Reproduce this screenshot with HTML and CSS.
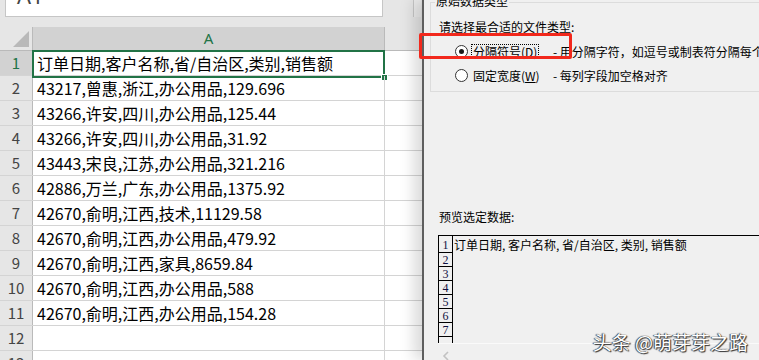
FILE: index.html
```html
<!DOCTYPE html>
<html lang="zh-CN">
<head>
    <meta charset="UTF-8">
    <meta name="viewport" content="width=device-width, initial-scale=1.0">
    <title>文本分列向导</title>
    <link rel="stylesheet" href="styles.css">
</head>
<body>
    <div class="screen">
        <div class="sheet">
            <div class="formula-area">
                <div class="name-box"><span>A1</span></div>
                <div class="formula-edge"></div>
            </div>
            <div class="col-header">
                <div class="corner"><span class="corner-tri"></span></div>
                <div class="col-a">A</div>
                <div class="col-b"></div>
            </div>
            <div class="row">
                <div class="row-num active">1</div>
                <div class="cell">订单日期,客户名称,省/自治区,类别,销售额<span class="selection"><span class="fill-handle"></span></span></div>
                <div class="cell-b"></div>
            </div>
            <div class="row"><div class="row-num">2</div><div class="cell">43217,曾惠,浙江,办公用品,129.696</div><div class="cell-b"></div></div>
            <div class="row"><div class="row-num">3</div><div class="cell">43266,许安,四川,办公用品,125.44</div><div class="cell-b"></div></div>
            <div class="row"><div class="row-num">4</div><div class="cell">43266,许安,四川,办公用品,31.92</div><div class="cell-b"></div></div>
            <div class="row"><div class="row-num">5</div><div class="cell">43443,宋良,江苏,办公用品,321.216</div><div class="cell-b"></div></div>
            <div class="row"><div class="row-num">6</div><div class="cell">42886,万兰,广东,办公用品,1375.92</div><div class="cell-b"></div></div>
            <div class="row"><div class="row-num">7</div><div class="cell">42670,俞明,江西,技术,11129.58</div><div class="cell-b"></div></div>
            <div class="row"><div class="row-num">8</div><div class="cell">42670,俞明,江西,办公用品,479.92</div><div class="cell-b"></div></div>
            <div class="row"><div class="row-num">9</div><div class="cell">42670,俞明,江西,家具,8659.84</div><div class="cell-b"></div></div>
            <div class="row"><div class="row-num">10</div><div class="cell">42670,俞明,江西,办公用品,588</div><div class="cell-b"></div></div>
            <div class="row"><div class="row-num">11</div><div class="cell">42670,俞明,江西,办公用品,154.28</div><div class="cell-b"></div></div>
            <div class="row"><div class="row-num">12</div><div class="cell"></div><div class="cell-b"></div></div>
            <div class="row"><div class="row-num">13</div><div class="cell"></div><div class="cell-b"></div></div>
        </div>

        <div class="dialog">
            <div class="group">
                <span class="group-title">原始数据类型</span>
                <div class="prompt">请选择最合适的文件类型:</div>
                <div class="option">
                    <span class="radio checked"></span>
                    <span class="option-label focus"><span>分隔符号(<u>D</u>)</span></span>
                    <span class="desc">-&nbsp;用分隔字符，如逗号或制表符分隔每个字段</span>
                </div>
                <div class="option">
                    <span class="radio"></span>
                    <span class="option-label"><span>固定宽度(<u>W</u>)</span></span>
                    <span class="desc">-&nbsp;每列字段加空格对齐</span>
                </div>
            </div>

            <div class="preview-title">预览选定数据:</div>
            <div class="preview">
                <div class="preview-nums">
                    <div class="pnum first">1</div>
                    <div class="pnum">2</div>
                    <div class="pnum">3</div>
                    <div class="pnum">4</div>
                    <div class="pnum">5</div>
                    <div class="pnum">6</div>
                    <div class="pnum">7</div>
                    <div class="pnum"></div>
                </div>
                <div class="preview-text">订单日期, 客户名称, 省/自治区, 类别, 销售额</div>
            </div>
            <div class="hscroll">
                <svg width="8" height="10" viewBox="0 0 8 10"><path d="M6 1 L2 5 L6 9" fill="none" stroke="#c2c2c2" stroke-width="1.6"/></svg>
            </div>
        </div>

        <!-- 红框标注 -->
        <div class="mark"></div>
        <div class="watermark">头条 @萌芽芽之路</div>
    </div>
</body>
</html>
```

FILE: styles.css
```css
* {
    margin: 0;
    padding: 0;
    box-sizing: border-box;
}

body {
    width: 759px;
    height: 360px;
    overflow: hidden;
    background-color: #f0f0f0;
    font-family: "Noto Sans CJK SC", sans-serif;
}

.screen {
    position: relative;
    display: flex;
    width: 759px;
    height: 360px;
    overflow: hidden;
}

/* 工作表 */
.sheet {
    width: 422px;
    flex: none;
    background-color: #fff;
    overflow: hidden;
}

.formula-area {
    height: 27px;
    display: flex;
    background-color: #e6e6e6;
}

.name-box {
    margin-left: 5px;
    width: 378px;
    height: 17px;
    background-color: #fff;
    border: 1px solid #c6c6c6;
    border-top: none;
    overflow: hidden;
    padding-left: 11px;
    font-family: "Noto Sans", sans-serif;
    font-size: 22px;
    line-height: 22px;
    color: #444;
}

.name-box span {
    display: block;
    margin-top: -16px;
}

.formula-edge {
    margin-left: 30px;
    width: 8px;
    height: 17px;
    border-left: 1px solid #c6c6c6;
    background-color: #ececec;
}

.col-header {
    display: flex;
    height: 24px;
    background-color: #e6e6e6;
    border-bottom: 1px solid #bababa;
}

.corner {
    width: 33px;
    display: flex;
    justify-content: flex-end;
    align-items: flex-end;
    padding: 0 3px 3px 0;
    border-right: 1px solid #bababa;
}

.corner-tri {
    width: 0;
    height: 0;
    border-left: 16px solid transparent;
    border-bottom: 16px solid #b9b9b9;
}

.col-a {
    width: 352px;
    background-color: #d2d2d2;
    border-right: 1px solid #bababa;
    color: #217346;
    text-align: center;
    font-family: "Noto Sans", sans-serif;
    font-size: 15px;
    line-height: 23px;
}

.col-b {
    flex: 1;
}

.row {
    display: flex;
    height: 25px;
    border-bottom: 1px solid #d4d4d4;
}

.row-num {
    width: 33px;
    background-color: #e6e6e6;
    border-right: 1px solid #bababa;
    text-align: center;
    font-size: 15px;
    line-height: 24px;
    color: #444;
}

.row-num.active {
    color: #217346;
    background-color: #d2d2d2;
}

.cell {
    position: relative;
    width: 352px;
    border-right: 1px solid #d4d4d4;
    padding-left: 4px;
    font-size: 16px;
    line-height: 24px;
    color: #000;
    white-space: nowrap;
}

.cell-b {
    flex: 1;
}

.selection {
    position: absolute;
    left: -1px;
    top: -1px;
    right: -1px;
    bottom: -3px;
    border: 2px solid #217346;
}

.fill-handle {
    position: absolute;
    right: -5px;
    bottom: -5px;
    width: 7px;
    height: 7px;
    background-color: #217346;
    border: 1px solid #fff;
}

/* 文本分列向导 */
.dialog {
    flex: 1;
    position: relative;
    z-index: 1;
    background-color: #f0f0f0;
    border-left: 2px solid #5e5e5e;
    box-shadow: -8px 0 14px rgba(0, 0, 0, 0.15);
    padding-left: 6px;
    font-size: 12px;
    color: #000;
    white-space: nowrap;
}

.group {
    position: relative;
    margin-top: 2px;
    border: 1px solid #dcdcdc;
    border-right: none;
    padding: 16px 0 4px 8px;
}

.group-title {
    position: absolute;
    top: -10px;
    left: 4px;
    padding: 0 1px;
    line-height: 16px;
    background-color: #f0f0f0;
}

.prompt {
    line-height: 16px;
    margin-bottom: 4px;
}

.option {
    display: flex;
    align-items: center;
    height: 24px;
    padding-left: 16px;
}

.radio {
    width: 13px;
    height: 13px;
    flex: none;
    border: 1px solid #333;
    border-radius: 50%;
    background-color: #fff;
    display: flex;
    justify-content: center;
    align-items: center;
}

.radio.checked::after {
    content: '';
    width: 5px;
    height: 5px;
    border-radius: 50%;
    background-color: #1a1a1a;
}

.option-label {
    width: 82px;
    flex: none;
    margin-left: 3px;
}

.option-label span {
    display: inline-block;
    padding: 0 1px;
    line-height: 13px;
    border: 1px dotted transparent;
}

.option-label.focus span {
    border-color: #000;
}

.preview-title {
    margin-top: 117px;
    padding-left: 9px;
    line-height: 16px;
}

.preview {
    display: flex;
    margin: 10px 0 0 8px;
    height: 108px;
    border-top: 1px solid #000;
    border-left: 1px solid #000;
    overflow: hidden;
}

.preview-nums {
    width: 14px;
    flex: none;
    border-right: 1px solid #000;
}

.pnum {
    height: 14px;
    border-bottom: 1px solid #000;
    font-family: "Liberation Serif", serif;
    font-size: 12px;
    line-height: 15px;
    text-align: center;
    color: #101040;
}

.pnum.first {
    height: 17px;
    line-height: 19px;
}

.preview-text {
    padding: 1px 0 0 1px;
    line-height: 16px;
}

.hscroll {
    margin-left: 8px;
    height: 17px;
    border-top: 1px solid #fafafa;
    padding: 3px 0 0 4px;
}

.mark {
    position: absolute;
    left: 419px;
    top: 33px;
    width: 153px;
    height: 26px;
    border: 3px solid #f2281c;
    border-radius: 2px;
    z-index: 2;
}

.watermark {
    position: absolute;
    right: 11px;
    top: 331px;
    z-index: 3;
    font-size: 19px;
    line-height: 22px;
    color: #fff;
    text-shadow: 0 0 1px #222, 1px 1px 1px #333, -1px 0 1px #444;
}
```
